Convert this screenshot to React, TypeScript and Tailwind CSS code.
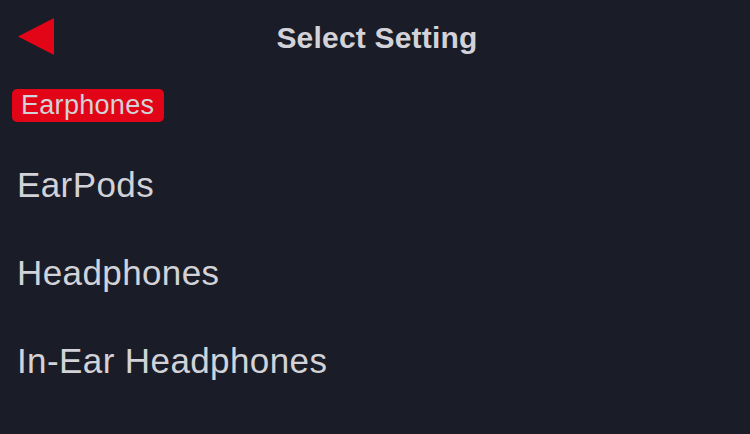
export default function App() {
  const items = ["EarPods", "Headphones", "In-Ear Headphones"];

  return (
    <div
      className="w-[750px] h-[434px] bg-[#1a1d27] text-[#d2d2d8] overflow-hidden"
      style={{ fontFamily: '"Liberation Sans", Arial, sans-serif' }}
    >
      {/* header */}
      <div className="relative h-[74px] flex items-center justify-center">
        <svg className="absolute left-[18px] top-[18px]" width="36" height="37" viewBox="0 0 36 37">
          <polygon points="0,18.5 36,0 36,37" fill="#e10517" />
        </svg>
        <h1 className="text-[30px] font-bold leading-none pt-[1px] pl-[4px] tracking-[0.2px]">Select Setting</h1>
      </div>

      <div className="pl-[12px] pt-[15px]">
        <span className="inline-block bg-[#e10517] rounded-[5px] h-[33px] pl-[9px] pr-[10px] text-[27px] leading-[33px] tracking-[0.3px]">
          Earphones
        </span>
      </div>

      <div className="pl-[17px] pt-[43px] flex flex-col gap-[48px]">
        {items.map((item) => (
          <div key={item} className="text-[35px] leading-[40px] tracking-[0.4px]">
            {item}
          </div>
        ))}
      </div>
    </div>
  );
}
